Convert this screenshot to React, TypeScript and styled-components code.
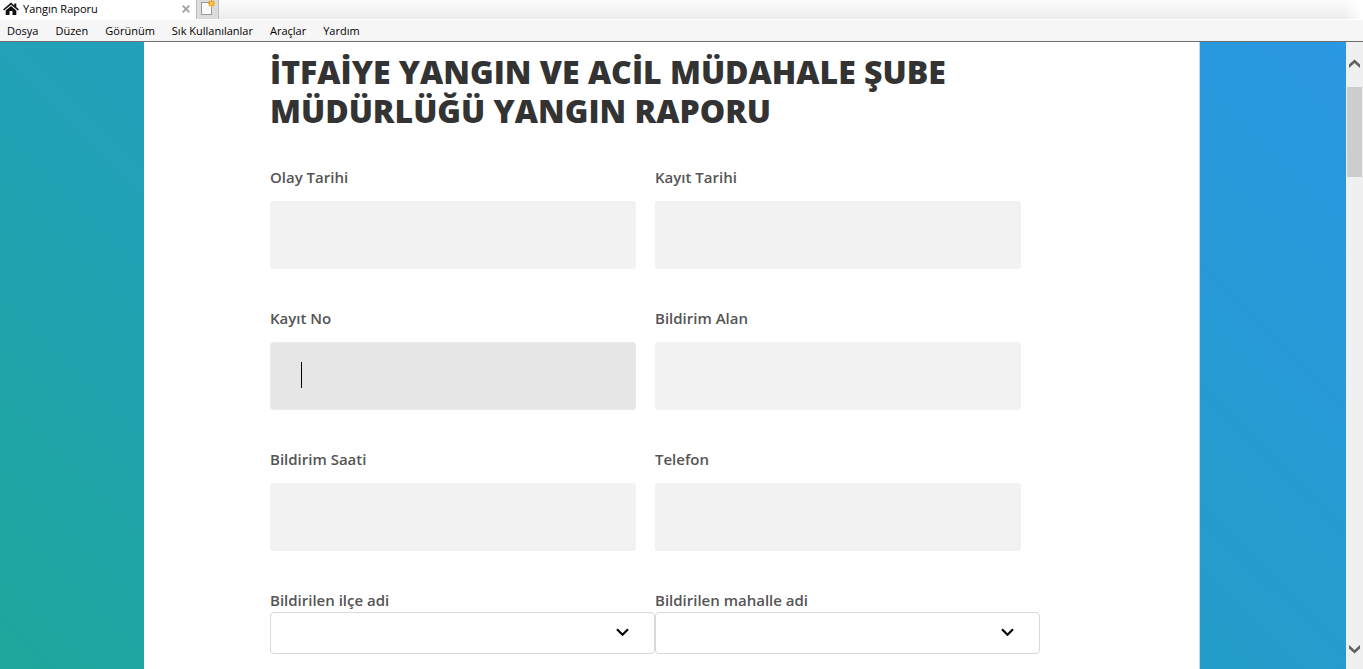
import React from "react";
import styled, { createGlobalStyle } from "styled-components";

const GlobalStyle = createGlobalStyle`
  *, *::before, *::after { box-sizing: border-box; }
  html, body { margin: 0; padding: 0; }
  body { background: #fff; font-family: "Open Sans", "Noto Sans", sans-serif; }
`;

const Window = styled.div`
  display: flex;
  flex-direction: column;
  height: 100vh;
  overflow: hidden;
`;

const TabStrip = styled.div`
  display: flex;
  flex: none;
  height: 19px;
  background:
    linear-gradient(to right, rgba(255, 255, 255, 0) calc(100% - 20px), #fff 100%),
    linear-gradient(to bottom, #fcfcfc, #ececec);
`;

const Tab = styled.div`
  display: flex;
  align-items: center;
  width: 196px;
  padding: 0 6px 2px 3px;
  gap: 4px;
  background: #fff;
  font-size: 11px;
  line-height: 17px;
  color: #000;
`;

const TabTitle = styled.span`
  flex: 1;
`;

const IconButton = styled.button`
  display: flex;
  padding: 0;
  border: 0;
  background: transparent;
`;

const NewTabButton = styled(IconButton)`
  width: 23px;
  padding: 0 0 0 4px;
  border: 1px solid #bdbdbd;
  border-top: 0;
  border-bottom: 0;
  background: #dcdcdc;
`;

const MenuBar = styled.nav`
  display: flex;
  flex: none;
  height: 23px;
  border-top: 1px solid #fff;
  border-bottom: 1px solid #6e6e6e;
  background: #f6f6f6;
`;

const MenuItem = styled.button`
  height: 21px;
  padding: 0 10px 0 7px;
  border: 0;
  background: transparent;
  font: 400 11px/21px "Open Sans", "Noto Sans", sans-serif;
  color: #000;
`;

const Viewport = styled.div`
  display: flex;
  flex: 1;
  min-height: 0;
`;

const Page = styled.main`
  display: flex;
  flex: 1;
  padding: 0 146px 0 144px;
  overflow: hidden;
  background: linear-gradient(45deg, #1ea79c 0%, #22a1b8 32%, #259ccd 68%, #2997e2 100%);
`;

const Card = styled.section`
  flex: 1;
  padding: 10px 126px;
  border-right: 1px solid #b5dcf3;
  background: #fff;
`;

const Heading = styled.h1`
  max-width: 770px;
  margin: 0 0 36px;
  font-size: 32px;
  font-weight: 800;
  line-height: 39px;
  color: #333;
`;

const Form = styled.form`
  display: grid;
  grid-template-columns: 1fr 1fr;
  row-gap: 38px;
  max-width: 770px;
`;

const Field = styled.div`
  display: flex;
  flex-direction: column;
`;

const Label = styled.label`
  font-size: 15px;
  font-weight: 600;
  line-height: 23px;
  color: #555;
`;

const InputBox = styled.div<{ $active?: boolean }>`
  position: relative;
  width: 95%;
  margin-top: 12px;

  &::after {
    content: "";
    display: ${(p) => (p.$active ? "block" : "none")};
    position: absolute;
    left: 31px;
    top: 20px;
    width: 1px;
    height: 26px;
    background: #000;
  }
`;

const Input = styled.input<{ $active?: boolean }>`
  display: block;
  width: 100%;
  height: 68px;
  padding: 0 31px;
  border: 1px solid ${(p) => (p.$active ? "#ebebeb" : "#f2f2f2")};
  border-radius: 3px;
  outline: none;
  background: ${(p) => (p.$active ? "#e6e6e6" : "#f2f2f2")};
  font: 600 18px/26px "Open Sans", "Noto Sans", sans-serif;
  color: #555;
`;

const SelectBox = styled.div`
  position: relative;

  svg {
    position: absolute;
    right: 26px;
    top: 16px;
    pointer-events: none;
  }
`;

const Select = styled.select`
  display: block;
  width: 100%;
  height: 42px;
  padding: 0 40px 0 16px;
  border: 1px solid #d9d9d9;
  border-radius: 4px;
  outline: none;
  appearance: none;
  background: #fff;
  font: 400 15px/24px "Open Sans", "Noto Sans", sans-serif;
  color: #555;
`;

const ScrollBar = styled.div`
  display: flex;
  flex: none;
  flex-direction: column;
  align-items: center;
  width: 17px;
  padding: 17px 1px 15px 1px;
  background: #f0f0f0;
`;

const ScrollThumb = styled.div`
  width: 15px;
  height: 90px;
  margin: 18px 0 auto;
  background: #cdcdcd;
`;

const HouseIcon = () => (
  <svg width="16" height="14" viewBox="0 0 16 14" aria-hidden="true">
    <path d="M8 0.6 L11.3 3.4 V1.4 H13.3 V5.1 L16 7.4 L14.9 8.5 L8 2.8 L1.1 8.5 L0 7.4 Z" fill="#111" />
    <path d="M8 4 L13.3 8.4 V13 H9.5 V9 H6.5 V13 H2.7 V8.4 Z" fill="#111" />
  </svg>
);

const CloseIcon = () => (
  <svg width="8" height="8" viewBox="0 0 8 8" aria-hidden="true">
    <path d="M0.7 0.7 L7.3 7.3 M7.3 0.7 L0.7 7.3" stroke="#a0a0a0" strokeWidth="1.8" />
  </svg>
);

const NewTabIcon = () => (
  <svg width="15" height="16" viewBox="0 0 15 16" aria-hidden="true">
    <rect x="0.5" y="2.5" width="10" height="12" fill="#fafafa" stroke="#9a9a9a" />
    <path d="M10.5 0 V7 M7 3.5 H14 M8 1 L13 6 M13 1 L8 6" stroke="#f09a18" strokeWidth="1.4" />
    <circle cx="10.5" cy="3.5" r="1.8" fill="#ffc83a" />
  </svg>
);

const ChevronIcon = () => (
  <svg width="13" height="9" viewBox="0 0 13 9" aria-hidden="true">
    <path d="M1 1.2 L6.5 6.7 L12 1.2" fill="none" stroke="#000" strokeWidth="2.2" />
  </svg>
);

const ScrollArrow = ({ down }: { down?: boolean }) => (
  <svg width="11" height="10" viewBox="0 0 11 10" aria-hidden="true">
    <path
      d={down ? "M0 1 L5.5 6 L11 1 V4.6 L5.5 9.6 L0 4.6 Z" : "M0 9 L5.5 4 L11 9 V5.4 L5.5 0.4 L0 5.4 Z"}
      fill="#606060"
    />
  </svg>
);

const menus = ["Dosya", "Düzen", "Görünüm", "Sık Kullanılanlar", "Araçlar", "Yardım"];

const inputs = [
  { id: "olay-tarihi", label: "Olay Tarihi" },
  { id: "kayit-tarihi", label: "Kayıt Tarihi" },
  { id: "kayit-no", label: "Kayıt No", active: true },
  { id: "bildirim-alan", label: "Bildirim Alan" },
  { id: "bildirim-saati", label: "Bildirim Saati" },
  { id: "telefon", label: "Telefon" },
];

const selects = [
  { id: "ilce", label: "Bildirilen ilçe adi" },
  { id: "mahalle", label: "Bildirilen mahalle adi" },
];

export default function App() {
  return (
    <Window lang="tr">
      <GlobalStyle />
      <TabStrip>
        <Tab>
          <HouseIcon />
          <TabTitle>Yangın Raporu</TabTitle>
          <IconButton type="button" aria-label="Sekmeyi kapat">
            <CloseIcon />
          </IconButton>
        </Tab>
        <NewTabButton type="button" aria-label="Yeni sekme">
          <NewTabIcon />
        </NewTabButton>
      </TabStrip>
      <MenuBar>
        {menus.map((m) => (
          <MenuItem key={m} type="button">
            {m}
          </MenuItem>
        ))}
      </MenuBar>
      <Viewport>
        <Page>
          <Card>
            <Heading>İTFAİYE YANGIN VE ACİL MÜDAHALE ŞUBE MÜDÜRLÜĞÜ YANGIN RAPORU</Heading>
            <Form>
              {inputs.map((f) => (
                <Field key={f.id}>
                  <Label htmlFor={f.id}>{f.label}</Label>
                  <InputBox $active={f.active}>
                    <Input id={f.id} type="text" $active={f.active} />
                  </InputBox>
                </Field>
              ))}
              {selects.map((f) => (
                <Field key={f.id}>
                  <Label htmlFor={f.id}>{f.label}</Label>
                  <SelectBox>
                    <Select id={f.id} />
                    <ChevronIcon />
                  </SelectBox>
                </Field>
              ))}
            </Form>
          </Card>
        </Page>
        <ScrollBar>
          <ScrollArrow />
          <ScrollThumb />
          <ScrollArrow down />
        </ScrollBar>
      </Viewport>
    </Window>
  );
}
